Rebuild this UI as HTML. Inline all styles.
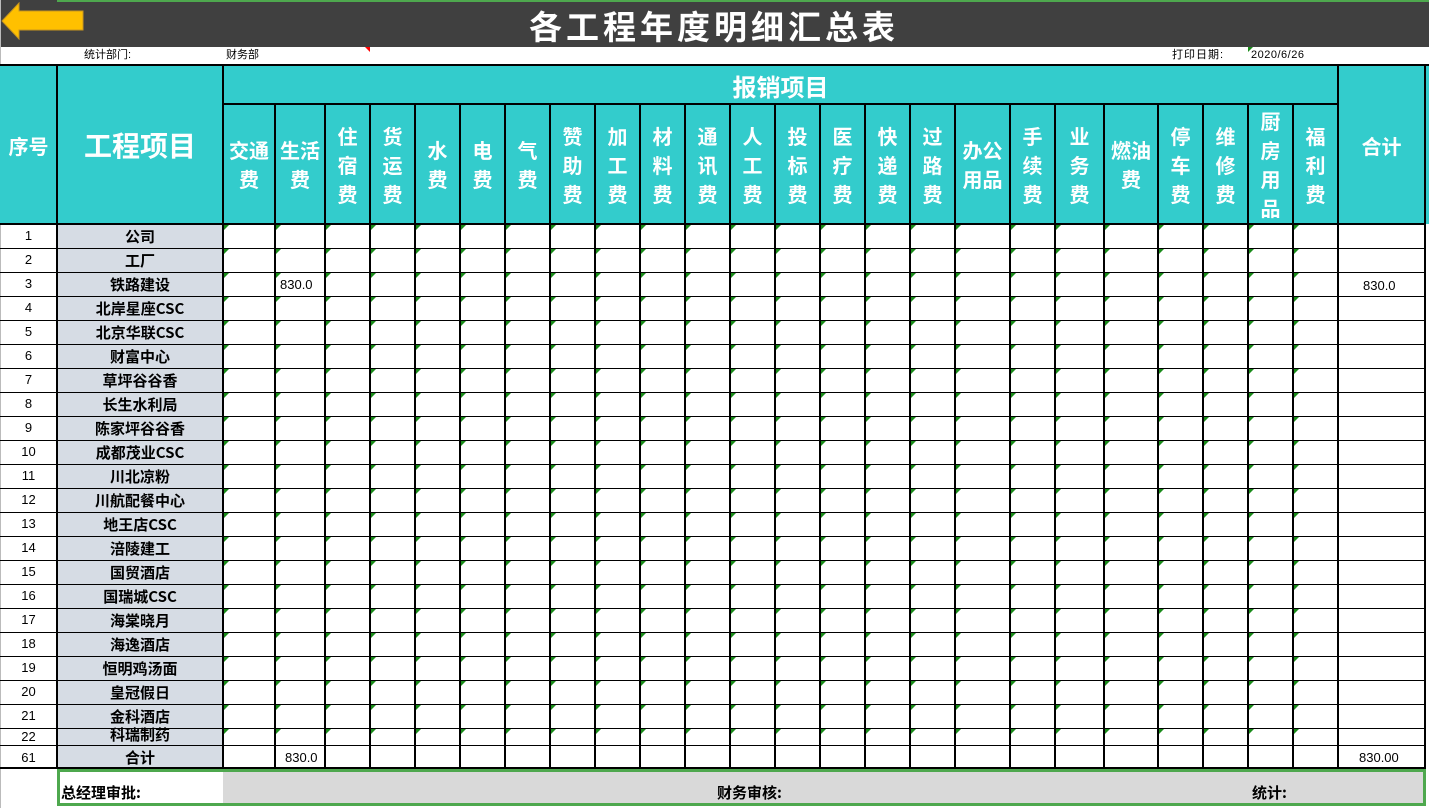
<!DOCTYPE html>
<html><head><meta charset="utf-8">
<style>
*{margin:0;padding:0;box-sizing:border-box}
body{width:1429px;height:808px;position:relative;background:#fff;overflow:hidden;font-family:"Liberation Sans","Noto Sans CJK SC",sans-serif}
.a{position:absolute}
.hd{position:absolute;top:104px;height:120px;display:flex;align-items:center;justify-content:center;text-align:center;color:#fff;font-weight:bold;font-size:20px;line-height:29px;font-family:"Noto Sans CJK SC",sans-serif}
.nm{position:absolute;left:57px;width:166px;text-align:center;font-weight:bold;font-size:15px;font-family:"Noto Sans CJK SC",sans-serif;color:#000}
.no{position:absolute;left:0;width:57px;text-align:center;font-size:13px;color:#000}
.vl{position:absolute;width:2px;background:#000}
.hl{position:absolute;height:2px;background:#000}
.tri{position:absolute;width:0;height:0;border-top:5px solid #1a8c1a;border-right:5px solid transparent}
.ft{position:absolute;font-weight:bold;font-size:15px;font-family:"Noto Sans CJK SC",sans-serif;top:782px}
</style></head><body>
<div class="a" style="left:0;top:0;width:1429px;height:47px;background:#404040"></div>
<div class="a" style="left:57px;top:0;width:1372px;height:2px;background:#4ea84e"></div>
<div class="a" style="left:0;top:0;width:1px;height:808px;background:#bbb"></div>
<svg class="a" style="left:1px;top:2px" width="84" height="38" viewBox="0 0 84 38"><path d="M1 19 L18 1 L18 9 L82 9 L82 28 L18 28 L18 37 Z" fill="#ffc000" stroke="#c8961e" stroke-width="1"/></svg>
<div class="a" style="left:529px;top:5px;font-size:33px;line-height:40px;color:#fff;letter-spacing:4px;font-family:'Noto Sans CJK SC',sans-serif;font-weight:bold;white-space:nowrap">各工程年度明细汇总表</div>
<div class="a" style="left:84px;top:47px;font-size:11px;line-height:17px">统计部门:</div>
<div class="a" style="left:226px;top:47px;font-size:11px;line-height:17px">财务部</div>
<div class="a" style="left:365px;top:47px;width:0;height:0;border-top:5px solid red;border-left:5px solid transparent"></div>
<div class="a" style="left:1172px;top:47px;font-size:11px;line-height:17px;letter-spacing:1px">打印日期:</div>
<div class="a" style="left:1251px;top:47px;font-size:11px;line-height:17px;letter-spacing:0.5px">2020/6/26</div>
<div class="tri" style="left:1248px;top:47px"></div>
<div class="a" style="left:0;top:64px;width:1429px;height:160px;background:#33cccc"></div>
<div class="a" style="left:0;top:64px;width:1429px;height:2px;background:#000"></div>
<div class="hd" style="left:0;top:66px;width:57px;height:158px;font-size:20px">序号</div>
<div class="hd" style="left:57px;top:66px;width:166px;height:158px;font-size:28px">工程项目</div>
<div class="hd" style="left:223px;top:66px;width:1115px;height:38px;font-size:24px">报销项目</div>
<div class="hd" style="left:1338px;top:66px;width:87px;height:158px">合计</div>
<div class="hd" style="left:223px;width:52px">交通<br>费</div>
<div class="hd" style="left:275px;width:50px">生活<br>费</div>
<div class="hd" style="left:325px;width:45px">住<br>宿<br>费</div>
<div class="hd" style="left:370px;width:45px">货<br>运<br>费</div>
<div class="hd" style="left:415px;width:45px">水<br>费</div>
<div class="hd" style="left:460px;width:45px">电<br>费</div>
<div class="hd" style="left:505px;width:45px">气<br>费</div>
<div class="hd" style="left:550px;width:45px">赞<br>助<br>费</div>
<div class="hd" style="left:595px;width:45px">加<br>工<br>费</div>
<div class="hd" style="left:640px;width:45px">材<br>料<br>费</div>
<div class="hd" style="left:685px;width:45px">通<br>讯<br>费</div>
<div class="hd" style="left:730px;width:45px">人<br>工<br>费</div>
<div class="hd" style="left:775px;width:45px">投<br>标<br>费</div>
<div class="hd" style="left:820px;width:45px">医<br>疗<br>费</div>
<div class="hd" style="left:865px;width:45px">快<br>递<br>费</div>
<div class="hd" style="left:910px;width:45px">过<br>路<br>费</div>
<div class="hd" style="left:955px;width:55px">办公<br>用品</div>
<div class="hd" style="left:1010px;width:45px">手<br>续<br>费</div>
<div class="hd" style="left:1055px;width:49px">业<br>务<br>费</div>
<div class="hd" style="left:1104px;width:54px">燃油<br>费</div>
<div class="hd" style="left:1158px;width:45px">停<br>车<br>费</div>
<div class="hd" style="left:1203px;width:45px">维<br>修<br>费</div>
<div class="hd" style="left:1248px;width:45px">厨<br>房<br>用<br>品</div>
<div class="hd" style="left:1293px;width:45px">福<br>利<br>费</div>
<div class="a" style="left:57px;top:224px;width:166px;height:545px;background:#d6dce4"></div>
<div id="g"></div>
<div class="no" style="top:228px">1</div><div class="nm" style="top:226px">公司</div>
<div class="no" style="top:252px">2</div><div class="nm" style="top:250px">工厂</div>
<div class="no" style="top:276px">3</div><div class="nm" style="top:274px">铁路建设</div>
<div class="no" style="top:300px">4</div><div class="nm" style="top:298px">北岸星座CSC</div>
<div class="no" style="top:324px">5</div><div class="nm" style="top:322px">北京华联CSC</div>
<div class="no" style="top:348px">6</div><div class="nm" style="top:346px">财富中心</div>
<div class="no" style="top:372px">7</div><div class="nm" style="top:370px">草坪谷谷香</div>
<div class="no" style="top:396px">8</div><div class="nm" style="top:394px">长生水利局</div>
<div class="no" style="top:420px">9</div><div class="nm" style="top:418px">陈家坪谷谷香</div>
<div class="no" style="top:444px">10</div><div class="nm" style="top:442px">成都茂业CSC</div>
<div class="no" style="top:468px">11</div><div class="nm" style="top:466px">川北凉粉</div>
<div class="no" style="top:492px">12</div><div class="nm" style="top:490px">川航配餐中心</div>
<div class="no" style="top:516px">13</div><div class="nm" style="top:514px">地王店CSC</div>
<div class="no" style="top:540px">14</div><div class="nm" style="top:538px">涪陵建工</div>
<div class="no" style="top:564px">15</div><div class="nm" style="top:562px">国贸酒店</div>
<div class="no" style="top:588px">16</div><div class="nm" style="top:586px">国瑞城CSC</div>
<div class="no" style="top:612px">17</div><div class="nm" style="top:610px">海棠晓月</div>
<div class="no" style="top:636px">18</div><div class="nm" style="top:634px">海逸酒店</div>
<div class="no" style="top:660px">19</div><div class="nm" style="top:658px">恒明鸡汤面</div>
<div class="no" style="top:684px">20</div><div class="nm" style="top:682px">皇冠假日</div>
<div class="no" style="top:708px">21</div><div class="nm" style="top:706px">金科酒店</div>
<div class="no" style="top:729px">22</div><div class="nm" style="top:725px;line-height:20px">科瑞制药</div>
<div class="no" style="top:750px">61</div><div class="nm" style="top:747px">合计</div>
<div class="a" style="left:280px;top:277px;font-size:13px">830.0</div>
<div class="a" style="left:1363px;top:278px;font-size:13px">830.0</div>
<div class="a" style="left:285px;top:750px;font-size:13px">830.0</div>
<div class="a" style="left:1359px;top:750px;font-size:13px">830.00</div>
<div class="a" style="left:57px;top:769px;width:1369px;height:37px;border:3px solid #4ea84e;background:#d9d9d9"></div>
<div class="a" style="left:60px;top:772px;width:163px;height:31px;background:#fff"></div>
<div class="ft" style="left:61px">总经理审批:</div>
<div class="ft" style="left:717px">财务审核:</div>
<div class="ft" style="left:1252px">统计:</div>
<script>
(function(){
var xs=[57,223,275,325,370,415,460,505,550,595,640,685,730,775,820,865,910,955,1010,1055,1104,1158,1203,1248,1293,1338,1425];
var g=document.getElementById('g'),h='';
for(var i=0;i<xs.length;i++){var t=(i>=2&&i<=24)?104:64;h+='<div class="vl" style="left:'+(xs[i]-1)+'px;top:'+t+'px;height:'+(769-t)+'px"></div>';}
h+='<div class="hl" style="left:223px;top:103px;width:1115px"></div>';
var ys=[224];for(var r=1;r<=20;r++)ys.push(224+r*24);ys.push(728,745,767);
for(var k=0;k<ys.length;k++){var st='left:0;width:1426px;';if(k==0)st+='top:223px;';else if(k==ys.length-1)st+='top:767px;';else st+='top:'+ys[k]+'px;height:1px;';h+='<div class="hl" style="'+st+'"></div>';}
for(var r=0;r<22;r++){for(var c=1;c<25;c++){h+='<div class="tri" style="left:'+(xs[c]+1)+'px;top:'+(ys[r]+1)+'px"></div>';}}
g.innerHTML=h;
})();
</script>
</body></html>
